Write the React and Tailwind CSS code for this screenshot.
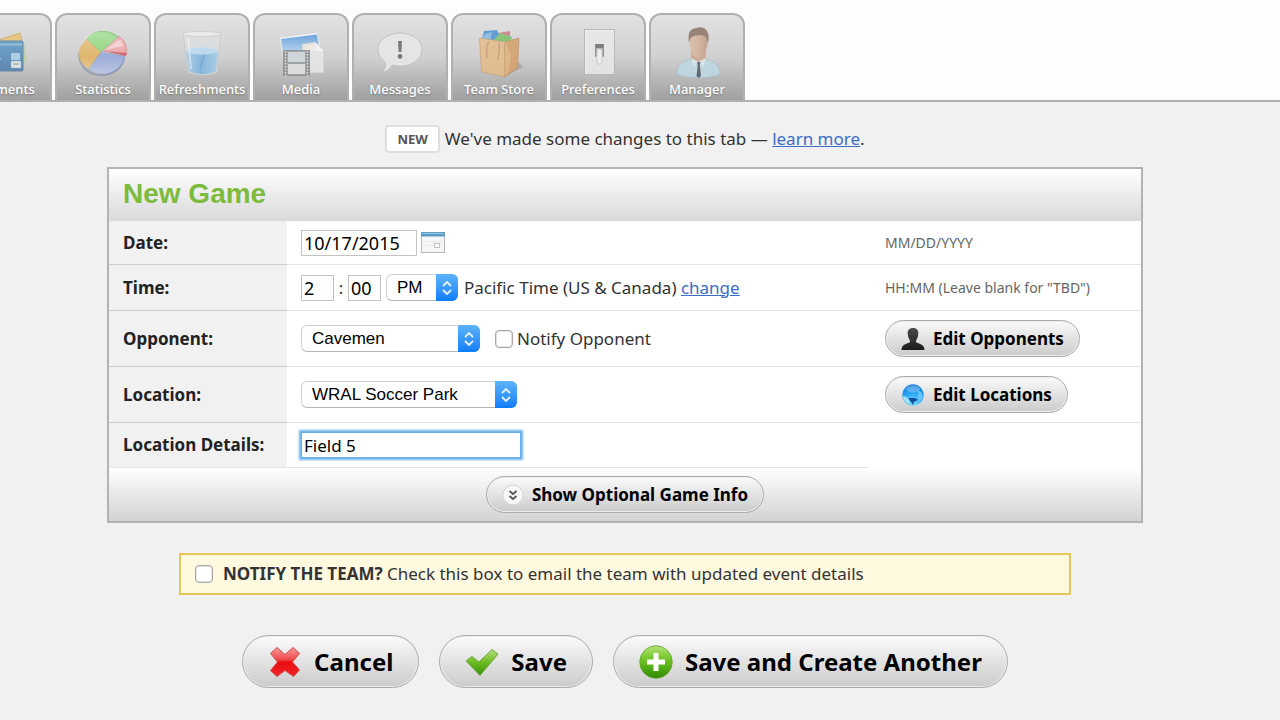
import { useState } from "react";

function PaymentsIcon() {
  return (
    <svg viewBox="0 0 56 56" className="h-14 w-14 opacity-85" aria-hidden="true">
      <defs>
        <linearGradient id="card" x1="0" y1="0" x2="0" y2="1">
          <stop offset="0" stopColor="#5b9cc9" />
          <stop offset="1" stopColor="#4f7cab" />
        </linearGradient>
      </defs>
      <path d="M8 20 L44 8 L50 34 L12 44Z" fill="#ecc476" stroke="#cfa866" />
      <path d="M12 18 L49 20 L50 38 L14 40Z" fill="#b6d3a6" />
      <rect x="3" y="16" width="44" height="30" rx="1" fill="url(#card)" stroke="#587fa6" />
      <path d="M4 19.500H46" stroke="#8fbbdb" strokeWidth="2" />
      <path d="M6 34H26M6 38H22" stroke="#a7c6df" strokeWidth="1.500" strokeDasharray="3 1" />
      <rect x="35" y="28" width="9" height="7" fill="#a9cfea" />
      <rect x="35" y="36" width="10" height="7" fill="#dfe9ee" stroke="#8fa9bd" strokeWidth=".5" />
      <path d="M37 39H43" stroke="#78a06c" />
    </svg>
  );
}

function StatisticsIcon() {
  return (
    <svg viewBox="0 0 56 56" className="h-14 w-14 opacity-85" aria-hidden="true">
      <defs>
        <linearGradient id="pieShine" x1="0" y1="0" x2="0" y2="1">
          <stop offset="0" stopColor="#fff" stopOpacity=".3" />
          <stop offset=".6" stopColor="#fff" stopOpacity="0" />
          <stop offset="1" stopColor="#fff" stopOpacity=".4" />
        </linearGradient>
      </defs>
      <path d="M3 28 C3 42 13 51 27 51 C40 51 50 42 50 31 L26 30Z" fill="#8f97ad" />
      <path d="M26 27 L12 14 C1 24 1 36 14 44Z" fill="#e3b25c" stroke="#c9a866" strokeWidth=".5" />
      <path d="M26 27 L12 14 C19 4 34 4 43 12Z" fill="#84d870" stroke="#77b56a" strokeWidth=".5" />
      <path d="M26 27 L14 44 C29 54 48 47 50 31Z" fill="#93a7dc" stroke="#8090ba" strokeWidth=".5" />
      <path d="M28 26 L44 11 C49 15 52 20 52 28Z" fill="#f0a0a6" stroke="#d38389" strokeWidth=".5" />
      <path d="M28 26 L52 28 L51 31Z" fill="#d4505c" />
      <path d="M29 25 L46 14 L49 21Z" fill="#f6cccd" />
      <ellipse cx="26" cy="28" rx="23" ry="21" fill="url(#pieShine)" />
    </svg>
  );
}

function RefreshmentsIcon() {
  return (
    <svg viewBox="0 0 56 56" className="h-14 w-14 opacity-85" aria-hidden="true">
      <defs>
        <linearGradient id="water" x1="0" y1="0" x2="1" y2="0">
          <stop offset="0" stopColor="#a9cde8" />
          <stop offset=".45" stopColor="#7db5e0" />
          <stop offset="1" stopColor="#a3cdea" />
        </linearGradient>
      </defs>
      <path d="M9 9 L14 47 C18 51 39 51 43 47 L47 9Z" fill="#dcdfe1" stroke="#c0c4c6" strokeWidth=".7" />
      <path d="M12 27 L15 46 C20 50 38 50 42 46 L44 27Z" fill="url(#water)" />
      <ellipse cx="28" cy="26" rx="16" ry="3.500" fill="#bcdcf1" />
      <path d="M30 30 L26 45" stroke="#6ba9d8" strokeWidth="2" />
      <ellipse cx="28" cy="9" rx="19" ry="2.500" fill="#efefef" stroke="#c3c5c6" strokeWidth=".7" />
      <path d="M14 13 L17 44" stroke="#fff" strokeOpacity=".5" strokeWidth="2" />
    </svg>
  );
}

function MediaIcon() {
  return (
    <svg viewBox="0 0 56 56" className="h-14 w-14 opacity-85" aria-hidden="true">
      <defs>
        <linearGradient id="sky" x1="0" y1="0" x2="0" y2="1">
          <stop offset="0" stopColor="#5b9be0" />
          <stop offset="1" stopColor="#b5d7f2" />
        </linearGradient>
      </defs>
      <path d="M6 12 L45 7 L50 36 L11 42Z" fill="#f1f4f6" stroke="#c9cdd0" strokeWidth=".7" />
      <path d="M8 14 L44 9.500 L46 22 L10 28Z" fill="url(#sky)" />
      <path d="M29 19 L42 17 L51 26 L51 48 L29 48Z" fill="#e7e8e8" stroke="#bdbfc0" strokeWidth=".7" />
      <path d="M42 17 L43 26 L51 26Z" fill="#f8f8f8" />
      <path d="M31 25l4-5 5 1 2 5z" fill="#f6f1de" />
      <rect x="10.500" y="25.500" width="26" height="25" fill="#d9dcdd" stroke="#8a8d8f" />
      <path d="M12.500 25V51M34.500 25V51" stroke="#8a8e90" strokeWidth="3" />
      <path d="M12.500 26V51M34.500 26V51" stroke="#e6e7e7" strokeWidth="1.500" strokeDasharray="1.5 1.5" />
      <rect x="14.500" y="26.500" width="18" height="11" fill="#cfd9de" stroke="#9a9e9f" />
      <rect x="14.500" y="38.500" width="18" height="11" fill="#dfe2e2" stroke="#9a9e9f" />
    </svg>
  );
}

function MessagesIcon() {
  return (
    <svg viewBox="0 0 56 56" className="h-14 w-14 opacity-85" aria-hidden="true">
      <path
        d="M28 8 C40 8 50 15 50 24.500 C50 34 41 41 29 41 C25 41 22 40.500 20 40 C18 44 14 47 10 47 C13 44 14 41 13 37 C9 34 6 30 6 24.500 C6 15 16 8 28 8Z"
        fill="#e9e9e9"
        stroke="#bfbfbf"
      />
      <path d="M26 16 H30 L29.400 27 H26.600Z" fill="#6c6c6c" />
      <circle cx="28" cy="31.500" r="2.400" fill="#6c6c6c" />
    </svg>
  );
}

function StoreIcon() {
  return (
    <svg viewBox="0 0 56 56" className="h-14 w-14 opacity-85" aria-hidden="true">
      <path d="M34 51 L52 42 L46 36Z" fill="#8e8e8e" opacity=".6" />
      <path d="M11 14 L13 6 L26 5 L31 16Z" fill="#4f95d4" />
      <path d="M11 14 L14 9 L21 7 L19 16Z" fill="#8abbe0" />
      <path d="M27 8 L39 6 L39 15 L30 16Z" fill="#cf7f88" />
      <path d="M22 16 L29 8 L41 12 L39 17Z" fill="#78c26a" />
      <path d="M8.500 13 L34 17 L33.500 52 L10.500 47Z" fill="#e5bb89" stroke="#c29a6d" strokeWidth=".7" />
      <path d="M34 17 L48 13 L46.500 43 L33.500 52Z" fill="#d6a067" stroke="#b98a5a" strokeWidth=".7" />
      <path d="M34 17 L40 29 L38 46 L33.500 52Z" fill="#e2b27b" />
      <path d="M16 33 C15 24 16 19 18 17 M27 35 C28 26 29 21 28 18" fill="none" stroke="#bd9568" strokeWidth="1.200" />
    </svg>
  );
}

function PreferencesIcon() {
  return (
    <svg viewBox="0 0 56 56" className="h-14 w-14 opacity-85" aria-hidden="true">
      <rect x="14.500" y="4.500" width="30" height="45" fill="#e9e9e9" stroke="#b5b5b5" />
      <path d="M16 48V6H43" fill="none" stroke="#f6f6f6" />
      <rect x="25" y="19" width="9" height="12" fill="#b0b0b0" />
      <rect x="25" y="19" width="9" height="4" fill="#6f6f6f" />
      <path d="M25.500 20V32M33.500 20V32" stroke="#858585" />
      <rect x="27" y="24" width="5" height="15" rx="1.500" fill="#f4f4f4" stroke="#b5b5b5" strokeWidth=".7" />
    </svg>
  );
}

function ManagerIcon() {
  return (
    <svg viewBox="0 0 56 56" className="h-14 w-14 opacity-85" aria-hidden="true">
      <defs>
        <linearGradient id="face" x1="0" y1="0" x2="1" y2="0">
          <stop offset="0" stopColor="#dcbda6" />
          <stop offset=".5" stopColor="#d2b29b" />
          <stop offset="1" stopColor="#bb9880" />
        </linearGradient>
      </defs>
      <path d="M8 49 C8 39 14 36 23 34 H36 C46 36 51 40 51 49 C43 54 16 54 8 49Z" fill="#bfdae5" stroke="#a3bcc6" strokeWidth=".7" />
      <path d="M22 26 H37 V34 L29.500 41 L22 34Z" fill="#cba78d" />
      <path d="M20 12 C20 0 39 0 39 12 C39 24 35 33 29.500 33 C24 33 20 24 20 12Z" fill="url(#face)" />
      <path d="M20 18 C18 5 23 4 27 3 C35 0 42 6 39 18 C38 13 36 10 32 10 C27 11 22 9 20 18Z" fill="#8c7568" />
      <path d="M22 33 L29.500 37 L25 42Z M37 33 L29.500 37 L34 42Z" fill="#dceaf0" />
      <path d="M28 37 H31.500 L30.800 40 L32 51 L29.700 53 L27.500 51 L28.800 40Z" fill="#4f5c67" />
    </svg>
  );
}

function CalendarIcon() {
  return (
    <svg viewBox="0 0 24 22" className="h-[22px] w-6" aria-hidden="true">
      <rect x=".5" y=".5" width="23" height="20" fill="#f6f6f6" stroke="#b4b8ba" />
      <rect x="0" y="0" width="24" height="4.500" fill="#5d9cc4" />
      <path d="M1 1.500H23" stroke="#93c4e0" />
      <path d="M2 9.500H22M2 13.500H12" stroke="#e9e9e9" />
      <rect x="13.500" y="11.500" width="5" height="4" fill="#fff" stroke="#c0c0c0" />
    </svg>
  );
}

function PersonIcon() {
  return (
    <svg viewBox="0 0 24 22" className="h-[22px] w-6" aria-hidden="true">
      <defs>
        <linearGradient id="suit" x1="0" y1="0" x2="0" y2="1">
          <stop offset="0" stopColor="#4a4a4a" />
          <stop offset="1" stopColor="#1c1c1c" />
        </linearGradient>
      </defs>
      <path
        d="M12 0 C15.800 0 17.800 2.500 17.200 6 C17.200 9 16 11 15 12.500 V14 C17.500 16 23.500 16 23.500 22 H.5 C.5 16 6.500 16 9 14 V12.500 C8 11 6.800 9 6.800 6 C6.200 2.500 8.200 0 12 0Z"
        fill="url(#suit)"
      />
    </svg>
  );
}

function GlobeIcon() {
  return (
    <svg viewBox="0 0 24 22" className="h-[22px] w-6" aria-hidden="true">
      <defs>
        <radialGradient id="ocean" cx=".5" cy=".9" r="1">
          <stop offset="0" stopColor="#7fe0ff" />
          <stop offset=".5" stopColor="#27a4f5" />
          <stop offset="1" stopColor="#176fd0" />
        </radialGradient>
      </defs>
      <circle cx="12" cy="11" r="10.700" fill="url(#ocean)" />
      <path d="M2 12 C5 12 6 14 8 15 L9 20 L6 19 C3 17 2 15 2 12Z" fill="#b8ecff" opacity=".8" />
      <path d="M7 14 L14 14 L17 16 L13 18 L12 21 L10 18Z" fill="#114f9b" />
      <path d="M17 6 L21 9 L22 14 L18 18 L17 13Z" fill="#7fd2fb" opacity=".7" />
      <ellipse cx="12" cy="5" rx="7" ry="3.500" fill="#fff" opacity=".25" />
    </svg>
  );
}

function ExpandIcon() {
  return (
    <svg viewBox="0 0 22 22" className="h-[22px] w-[22px]" aria-hidden="true">
      <circle cx="11" cy="11" r="10" fill="#f7f7f7" stroke="#d4d4d4" />
      <path d="M7.500 7 L11 10 L14.500 7 M7.500 12 L11 15 L14.500 12" fill="none" stroke="#555" strokeWidth="1.800" />
    </svg>
  );
}

function CrossIcon() {
  return (
    <svg viewBox="0 0 34 34" className="h-[34px] w-[34px]" aria-hidden="true">
      <defs>
        <linearGradient id="cross" x1="0" y1="0" x2="0" y2="1">
          <stop offset="0" stopColor="#f79a9a" />
          <stop offset=".42" stopColor="#f04a4a" />
          <stop offset=".5" stopColor="#e90d10" />
          <stop offset="1" stopColor="#f02326" />
        </linearGradient>
      </defs>
      <path
        d="M9 2.500 L17 9.500 L25 2.500 L31.500 8.500 L24.500 17 L31.500 25 L25.500 31.500 L17 25.500 L9 31.500 L2.500 25.500 L9.500 17 L2.500 8.500Z"
        fill="url(#cross)"
        stroke="#d6494b"
        strokeLinejoin="round"
      />
    </svg>
  );
}

function CheckIcon() {
  return (
    <svg viewBox="0 0 34 34" className="h-[34px] w-[34px]" aria-hidden="true">
      <defs>
        <linearGradient id="check" x1="0" y1="0" x2="0" y2="1">
          <stop offset="0" stopColor="#b9e07f" />
          <stop offset=".5" stopColor="#6bbb24" />
          <stop offset="1" stopColor="#3d8f07" />
        </linearGradient>
      </defs>
      <path
        d="M1 16 L7 11.500 L14 17 L27 4.500 L33 9 L15 30.500Z"
        fill="url(#check)"
        stroke="#6ba63a"
        strokeLinejoin="round"
      />
    </svg>
  );
}

function PlusIcon() {
  return (
    <svg viewBox="0 0 34 34" className="h-[34px] w-[34px]" aria-hidden="true">
      <defs>
        <linearGradient id="plus" x1="0" y1="0" x2="0" y2="1">
          <stop offset="0" stopColor="#b5e476" />
          <stop offset=".45" stopColor="#6dc221" />
          <stop offset="1" stopColor="#2f8a02" />
        </linearGradient>
      </defs>
      <circle cx="17" cy="17" r="16.300" fill="url(#plus)" stroke="#66a634" strokeWidth=".8" />
      <path d="M14.500 8 H19.500 V14.500 H26 V19.500 H19.500 V26 H14.500 V19.500 H8 V14.500 H14.500Z" fill="#fff" />
    </svg>
  );
}

const tabs = [
  { name: "Payments", Icon: PaymentsIcon },
  { name: "Statistics", Icon: StatisticsIcon },
  { name: "Refreshments", Icon: RefreshmentsIcon },
  { name: "Media", Icon: MediaIcon },
  { name: "Messages", Icon: MessagesIcon },
  { name: "Team Store", Icon: StoreIcon },
  { name: "Preferences", Icon: PreferencesIcon },
  { name: "Manager", Icon: ManagerIcon },
];

function TabBar() {
  return (
    <nav className="overflow-hidden border-b-2 border-[#b0b0b0] bg-[#fcfdfd] pt-[13px]">
      <ul className="-ml-11 flex gap-[3px]">
        {tabs.map(({ name, Icon }) => (
          <li key={name} className="shrink-0">
            <a
              href="#"
              className="flex h-[87px] w-24 flex-col items-center rounded-t-xl border-2 border-b-0 border-[#b0b0b0] bg-linear-to-b from-[#e2e2e2] via-[#d0d0d0] to-[#a0a0a0] pt-[10px]"
            >
              <Icon />
              <span className="text-[13px] leading-4 font-medium whitespace-nowrap text-white [text-shadow:0_1px_2px_#777]">
                {name}
              </span>
            </a>
          </li>
        ))}
      </ul>
    </nav>
  );
}

function MacSelect({ id, label, options, className }) {
  return (
    <span className="relative inline-flex">
      <select
        id={id}
        aria-label={label}
        className={`h-[27px] appearance-none rounded-md border border-[#cfcfcf] border-b-[#b5b5b5] bg-white pl-2.5 font-['Liberation_Sans',sans-serif] text-[17px] leading-5 text-black ${className}`}
      >
        {options.map((option) => (
          <option key={option}>{option}</option>
        ))}
      </select>
      <span className="pointer-events-none absolute inset-y-0 right-0 flex w-[22px] items-center justify-center rounded-r-md bg-linear-to-b from-[#5db4fb] to-[#0a7dfb]">
        <svg viewBox="0 0 12 16" className="h-4 w-3" aria-hidden="true">
          <path d="M2 6 L6 2 L10 6 M2 10 L6 14 L10 10" fill="none" stroke="#e6f3ff" strokeWidth="1.800" />
        </svg>
      </span>
    </span>
  );
}

function Row({ label, htmlFor, aside, height, last, children }) {
  return (
    <div className={`flex ${height}`}>
      <div
        className={`flex w-[178px] shrink-0 items-center border-b bg-[#f1f1f1] pl-3.5 ${
          last ? "border-[#e4e4e4]" : "border-[#cbcbcb]"
        }`}
      >
        <label htmlFor={htmlFor} className="text-[17px] leading-5 font-bold whitespace-nowrap text-[#222]">
          {label}
        </label>
      </div>
      <div className="flex min-w-0 flex-1 items-center border-b border-[#e4e4e4] pl-3.5">{children}</div>
      <div
        className={`flex w-[272px] shrink-0 items-center pl-4 text-sm leading-5 text-[#666] ${
          last ? "" : "border-b border-[#e4e4e4]"
        }`}
      >
        {aside}
      </div>
    </div>
  );
}

const pill =
  "inline-flex items-center rounded-full border border-[#acacac] bg-linear-to-b from-[#fbfbfb] to-[#cbcbcb] font-bold whitespace-nowrap text-black shadow-[inset_0_0_0_1px_#ececec]";
const smallPill = `${pill} h-[37px] gap-2 px-[15px] text-[17px] leading-5`;
const largePill = `${pill} h-[53px] gap-3 px-[25px] text-2xl leading-8`;

const textBox = "h-[26px] border border-[#c3c3c3] bg-white px-0.5 text-lg leading-5 text-black";

const tickBox =
  "h-[18px] w-[18px] appearance-none rounded-sm border border-[#a9a9a9] bg-white shadow-[inset_0_0_0_1px_#e2e2e2] checked:bg-[#0a7dfb]";

export default function App() {
  const [details, setDetails] = useState("Field 5");

  return (
    <div className="min-h-screen bg-[#f1f1f1] font-['Noto_Sans',sans-serif] text-[#333]">
      <TabBar />

      <main className="pt-[23px] pr-[30px] pb-8">
        <p className="flex items-center justify-center gap-[5px] text-[17px] leading-6">
          <span className="rounded-sm border-2 border-[#dedede] bg-white px-2.5 text-[13px] font-bold text-[#555]">
            NEW
          </span>
          <span>
            We've made some changes to this tab —{" "}
            <a href="#" className="text-[#3c6ec5] underline">
              learn more
            </a>
            .
          </span>
        </p>

        <form onSubmit={(e) => e.preventDefault()}>
          <section className="mx-auto mt-[14px] w-full max-w-[1036px] border-2 border-[#b3b3b3] bg-white">
            <h1 className="bg-linear-to-b from-white to-[#d9d9d9] pt-[9px] pb-[11px] pl-3.5 font-['Liberation_Sans',sans-serif] text-[28px] leading-8 font-bold text-[#7dbb3d]">
              New Game
            </h1>

            <Row label="Date:" htmlFor="date" height="h-[44px]" aside="MM/DD/YYYY">
              <input id="date" defaultValue="10/17/2015" className={`${textBox} w-[116px]`} />
              <button type="button" aria-label="Pick a date" className="ml-1">
                <CalendarIcon />
              </button>
            </Row>

            <Row label="Time:" htmlFor="hour" height="h-[46px]" aside={'HH:MM (Leave blank for "TBD")'}>
              <input id="hour" defaultValue="2" className={`${textBox} w-[33px]`} />
              <span className="w-[14px] text-center text-[17px]">:</span>
              <input aria-label="Minutes" defaultValue="00" className={`${textBox} w-[33px]`} />
              <span className="ml-[5px] inline-flex">
                <MacSelect id="meridiem" label="AM or PM" options={["PM", "AM"]} className="w-[72px]" />
              </span>
              <span className="ml-1.5 text-[17px] leading-5 whitespace-nowrap">
                Pacific Time (US & Canada){" "}
                <a href="#" className="text-[#3c6ec5] underline">
                  change
                </a>
              </span>
            </Row>

            <Row
              label="Opponent:"
              htmlFor="opponent"
              height="h-[56px]"
              aside={
                <button type="button" className={smallPill}>
                  <PersonIcon />
                  Edit Opponents
                </button>
              }
            >
              <MacSelect id="opponent" options={["Cavemen"]} className="w-[179px]" />
              <label className="ml-[15px] flex items-center gap-1 text-[17px] leading-5">
                <input type="checkbox" className={tickBox} />
                Notify Opponent
              </label>
            </Row>

            <Row
              label="Location:"
              htmlFor="location"
              height="h-[56px]"
              aside={
                <button type="button" className={smallPill}>
                  <GlobeIcon />
                  Edit Locations
                </button>
              }
            >
              <MacSelect id="location" options={["WRAL Soccer Park"]} className="w-[216px]" />
            </Row>

            <Row label="Location Details:" htmlFor="details" height="h-[45px]" last>
              <input
                id="details"
                value={details}
                onChange={(e) => setDetails(e.target.value)}
                className="h-[26px] w-[220px] border border-[#62aeea] bg-white px-0.5 text-[17px] leading-5 text-black shadow-[0_0_2px_2px_#6fb3ea] outline-none"
              />
            </Row>

            <div className="flex justify-center bg-linear-to-b from-white to-[#d3d3d3] pt-2 pb-2">
              <button type="button" className={smallPill}>
                <ExpandIcon />
                Show Optional Game Info
              </button>
            </div>
          </section>

          <label className="mx-auto mt-[30px] flex h-[42px] w-full max-w-[892px] items-center gap-2.5 border-2 border-[#e8c55c] bg-[#fff9e0] pl-3.5 text-[17px] leading-5">
            <input type="checkbox" className={tickBox} />
            <span>
              <strong>NOTIFY THE TEAM?</strong> Check this box to email the team with updated event details
            </span>
          </label>

          <div className="mt-10 flex flex-wrap justify-center gap-5">
            <button type="button" className={largePill}>
              <CrossIcon />
              Cancel
            </button>
            <button type="submit" className={largePill}>
              <CheckIcon />
              Save
            </button>
            <button type="submit" className={largePill}>
              <PlusIcon />
              Save and Create Another
            </button>
          </div>
        </form>
      </main>
    </div>
  );
}
